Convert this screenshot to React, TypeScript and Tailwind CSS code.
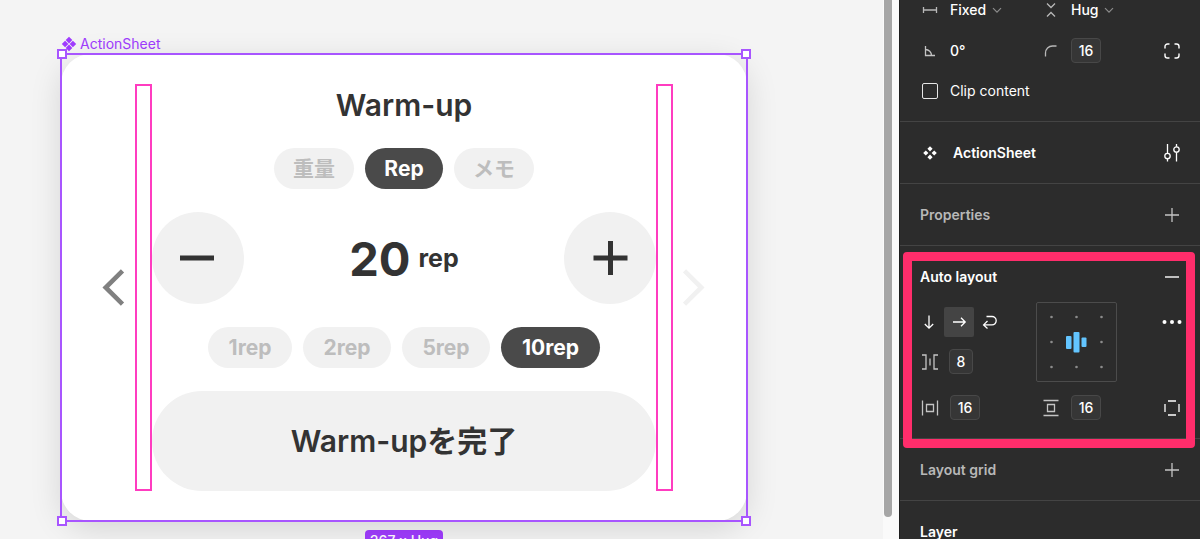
import React, { useState } from 'react';

interface IconProps {
  children: React.ReactNode;
  className?: string;
}

// 20x20 stroke icon used all over the inspector
const Icon: React.FC<IconProps> = ({ children, className = '' }) => (
  <svg
    viewBox="0 0 20 20"
    className={`w-5 h-5 shrink-0 ${className}`}
    fill="none"
    stroke="currentColor"
    strokeWidth="1.3"
    aria-hidden="true"
  >
    {children}
  </svg>
);

const ComponentIcon: React.FC<{ className?: string }> = ({ className = '' }) => (
  <svg viewBox="0 0 16 16" className={`w-4 h-4 shrink-0 ${className}`} fill="currentColor" aria-hidden="true">
    <path d="M8 .8 11.300 4.100 8 7.400 4.700 4.100ZM8 8.600 11.300 11.900 8 15.200 4.700 11.900ZM4.100 4.700 7.400 8 4.100 11.300.8 8ZM11.900 4.700 15.200 8 11.900 11.300 8.600 8Z" />
  </svg>
);

const Plus = () => (
  <Icon className="text-[#c4c4c4]">
    <path d="M3 10h14M10 3v14" />
  </Icon>
);

interface PillProps {
  label: string;
  width: string;
  active: boolean;
  onClick: () => void;
}

const Pill: React.FC<PillProps> = ({ label, width, active, onClick }) => (
  <button
    onClick={onClick}
    className={`h-[41px] rounded-full text-[21px] font-bold ${width} ${
      active ? 'bg-[#4a4a4a] text-white' : 'bg-[#f1f1f1] text-[#bdbdbd]'
    }`}
  >
    {label}
  </button>
);

const Spacing = () => <div className="w-[17px] shrink-0 border-2 border-[#ff3cc0]" />;

const tabs = [
  { label: '重量', width: 'w-20' },
  { label: 'Rep', width: 'w-[78px]' },
  { label: 'メモ', width: 'w-20' },
];

const steps = [
  { label: '1rep', value: 1, width: 'w-[84px]' },
  { label: '2rep', value: 2, width: 'w-[88px]' },
  { label: '5rep', value: 5, width: 'w-[88px]' },
  { label: '10rep', value: 10, width: 'w-[99px]' },
];

const ActionSheet = () => {
  const [tab, setTab] = useState('Rep');
  const [step, setStep] = useState(10);
  const [count, setCount] = useState(20);

  return (
    <div className="flex rounded-[30px] bg-white px-[30px] py-[30px] text-[#333333] shadow-[0_8px_32px_rgba(0,0,0,0.13)]">
      <button aria-label="Previous" className="w-11 shrink-0 flex items-center justify-center text-[#808080]">
        <svg viewBox="0 0 24 40" className="w-6 h-10" fill="none" stroke="currentColor" strokeWidth="4.600">
          <path d="M21.500 2.800 4.700 19.500 21.500 36.200" />
        </svg>
      </button>
      <Spacing />
      <div className="flex-1 min-w-0 flex flex-col gap-[23px]">
        <h1 className="h-[41px] pt-0.5 flex items-center justify-center text-[30px] font-semibold">Warm-up</h1>
        <div className="flex justify-center gap-[11px]">
          {tabs.map((t) => (
            <Pill key={t.label} label={t.label} width={t.width} active={tab === t.label} onClick={() => setTab(t.label)} />
          ))}
        </div>
        <div className="flex items-center justify-between">
          <button
            aria-label="Decrease"
            onClick={() => setCount(count - step)}
            className="w-[92px] h-[92px] rounded-full bg-[#f1f1f1] flex items-center justify-center"
          >
            <svg viewBox="0 0 36 36" className="w-9 h-9" stroke="currentColor" strokeWidth="5">
              <path d="M0 18h34" />
            </svg>
          </button>
          <p className="flex items-center gap-2">
            <span className="text-[47px] leading-none font-bold">{count}</span>
            <span className="text-[25px] leading-none font-bold">rep</span>
          </p>
          <button
            aria-label="Increase"
            onClick={() => setCount(count + step)}
            className="w-[92px] h-[92px] rounded-full bg-[#f1f1f1] flex items-center justify-center"
          >
            <svg viewBox="0 0 36 36" className="w-9 h-9" stroke="currentColor" strokeWidth="5">
              <path d="M1.500 18h34M18.500 1v34" />
            </svg>
          </button>
        </div>
        <div className="flex justify-center gap-[11px]">
          {steps.map((s) => (
            <Pill key={s.label} label={s.label} width={s.width} active={step === s.value} onClick={() => setStep(s.value)} />
          ))}
        </div>
        <button className="h-[100px] rounded-full bg-[#f1f1f1] text-[30px] font-semibold">Warm-upを完了</button>
      </div>
      <Spacing />
      <button aria-label="Next" className="w-11 shrink-0 flex items-center justify-center text-[#f1f1f1]">
        <svg viewBox="0 0 24 40" className="w-6 h-10" fill="none" stroke="currentColor" strokeWidth="4.600">
          <path d="M1.500 2.800 18.300 19.500 1.500 36.200" />
        </svg>
      </button>
    </div>
  );
};

const Canvas = () => (
  <main className="flex-1 min-w-0 overflow-hidden bg-[#f4f4f4] pl-[61px] pr-4 pt-9">
    <div className="max-w-[686px]">
      <div className="flex items-center gap-[3px] h-[18px] pb-0.5 text-[#a03cff]">
        <ComponentIcon />
        <span className="text-sm leading-4">ActionSheet</span>
      </div>
      <div className="relative">
        <ActionSheet />
        {/* Selection outline and its handles */}
        <div className="absolute -inset-px border-2 border-[#a855ff] pointer-events-none" />
        <span className="absolute -left-1 -top-[5px] w-2.5 h-2.5 border-2 border-[#a855ff] bg-white" />
        <span className="absolute -right-1 -top-[5px] w-2.5 h-2.5 border-2 border-[#a855ff] bg-white" />
        <span className="absolute -left-1 -bottom-[5px] w-2.5 h-2.5 border-2 border-[#a855ff] bg-white" />
        <span className="absolute -right-1 -bottom-[5px] w-2.5 h-2.5 border-2 border-[#a855ff] bg-white" />
      </div>
      <div className="mt-[9px] flex justify-center">
        <span className="rounded bg-[#a03cff] px-[5px] py-px text-sm leading-5 font-medium text-white">367 x Hug</span>
      </div>
    </div>
  </main>
);

interface ValueBoxProps {
  label: string;
  value: string;
  width?: string;
}

const ValueBox: React.FC<ValueBoxProps> = ({ label, value, width = 'w-[30px]' }) => (
  <input
    aria-label={label}
    defaultValue={value}
    className={`h-[25px] rounded border border-[#484848] bg-[#363636] text-center text-sm font-medium text-white ${width}`}
  />
);

interface SizingProps {
  label: string;
  value: string;
  width: string;
}

const Sizing: React.FC<SizingProps> = ({ label, value, width }) => (
  <span className="flex items-center">
    <select aria-label={label} defaultValue={value} className={`appearance-none bg-transparent text-sm font-medium text-white ${width}`}>
      <option>Fixed</option>
      <option>Hug</option>
    </select>
    <svg viewBox="0 0 10 10" className="w-2.5 h-2.5" fill="none" stroke="#8c8c8c" strokeWidth="1.2">
      <path d="M1 3.200 5 7.200 9 3.200" />
    </svg>
  </span>
);

const row = 'grid grid-cols-[121px_121px_1fr] items-center';
const cell = 'flex items-center gap-2.5';
const section = 'flex h-[62px] items-center justify-between border-b border-[#444444] pl-5 pr-[18px]';

const Inspector = () => {
  const [clip, setClip] = useState(false);

  return (
    <aside className="w-[301px] shrink-0 overflow-hidden border-l border-[#1e1e1e] bg-[#2c2c2c] text-sm text-white">
      <section className="h-[122px] border-b border-[#444444] pl-5 pr-[18px]">
        <div className={`${row} h-5`}>
          <div className={cell}>
            <Icon className="text-[#b8b8b8]">
              <path d="M3.500 7v6M16.500 7v6M3.500 10h13" />
            </Icon>
            <Sizing label="Horizontal sizing" value="Fixed" width="w-[42px]" />
          </div>
          <div className={cell}>
            <Icon className="text-[#b8b8b8]">
              <path d="M6 3.500 10 7.500 14 3.500M6 16.500 10 12.500 14 16.500" />
            </Icon>
            <Sizing label="Vertical sizing" value="Hug" width="w-[33px]" />
          </div>
        </div>
        <div className={`${row} mt-[18px] h-[25px]`}>
          <div className={cell}>
            <Icon className="text-[#c4c4c4]">
              <path d="M5.500 5v9.500h9.500M5.500 8.500a6 6 0 0 1 6 6" />
            </Icon>
            <input aria-label="Rotation" defaultValue="0°" className="w-10 bg-transparent text-sm font-medium text-white" />
          </div>
          <div className={cell}>
            <Icon className="text-[#b8b8b8]">
              <path d="M4.500 15.500v-3.500a7 7 0 0 1 7-7h4" />
            </Icon>
            <ValueBox label="Corner radius" value="16" />
          </div>
          <button aria-label="Independent corners" className="justify-self-end">
            <Icon>
              <path strokeWidth="1.400" strokeLinecap="round" d="M3 7V5.500A2.500 2.500 0 0 1 5.500 3H7M13 3h1.500A2.500 2.500 0 0 1 17 5.500V7M17 13v1.500a2.500 2.500 0 0 1-2.500 2.500H13M7 17H5.500A2.500 2.500 0 0 1 3 14.500V13" />
            </Icon>
          </button>
        </div>
        <label className="mt-[18px] flex h-5 items-center gap-3 pl-0.5">
          <input
            type="checkbox"
            checked={clip}
            onChange={(e) => setClip(e.target.checked)}
            className="w-4 h-4 appearance-none rounded-xs border border-[#e6e6e6] checked:bg-white"
          />
          Clip content
        </label>
      </section>

      <section className={section}>
        <h2 className="flex items-center gap-[13px] font-semibold">
          <svg viewBox="0 0 20 20" className="w-5 h-5" fill="currentColor" aria-hidden="true">
            <path d="M10 3.200 12.600 5.800 10 8.400 7.400 5.800ZM10 11.600 12.600 14.200 10 16.800 7.400 14.200ZM5.800 7.400 8.400 10 5.800 12.600 3.200 10ZM14.200 7.400 16.800 10 14.200 12.600 11.600 10Z" />
          </svg>
          ActionSheet
        </h2>
        <button aria-label="Component configuration">
          <Icon>
            <path d="M5.500 1v9.200M5.500 15.800V18.500M14.500 1v2.700M14.500 9.300V18.500" />
            <circle cx="5.500" cy="13" r="2.700" />
            <circle cx="14.500" cy="6.500" r="2.700" />
          </Icon>
        </button>
      </section>

      <section className={section}>
        <h2 className="font-semibold text-[#b8b8b8]">Properties</h2>
        <button aria-label="Add property">
          <Plus />
        </button>
      </section>

      <section className="relative h-[193px] border-b border-[#444444] pl-5 pr-[18px]">
        <div className="flex h-[62px] items-center justify-between">
          <h2 className="font-semibold">Auto layout</h2>
          <button aria-label="Remove auto layout">
            <Icon>
              <path strokeWidth="1.400" d="M3 10h14" />
            </Icon>
          </button>
        </div>
        <div className="-mt-1.5 grid grid-cols-[116px_121px_1fr]">
          <div>
            <div className="mt-1 flex h-[31px] items-center">
              <button aria-label="Vertical layout" className="-ml-px mr-[5px]">
                <Icon>
                  <path d="M10 3.500v12.500M5.800 12 10 16.200 14.200 12" />
                </Icon>
              </button>
              <button aria-label="Horizontal layout" className="flex h-[30px] w-[30px] items-center justify-center rounded-xs bg-[#444444]">
                <Icon>
                  <path d="M4 10h12M12 5.800 16.200 10 12 14.200" />
                </Icon>
              </button>
              <button aria-label="Wrap" className="ml-1.5">
                <Icon>
                  <path d="M6.500 4.500h5.500a4.200 4.200 0 0 1 0 8.400H3.800M7.500 9 3.600 12.900 7.500 16.500" />
                </Icon>
              </button>
            </div>
            <div className="mt-3 flex items-center gap-[9px]">
              <Icon className="text-[#c4c4c4]">
                <path d="M2 3h4v14H2M18 3h-4v14h4M10 6.500v7" />
              </Icon>
              <ValueBox label="Gap between items" value="8" width="w-6" />
            </div>
          </div>
          <button aria-label="Alignment" className="h-20 w-[81px]">
            <svg viewBox="0 0 81 80" className="h-20 w-[81px]">
              <rect x="0.500" y="0.500" width="80" height="79" rx="1.500" fill="none" stroke="#4c4c4c" />
              <g fill="#8c8c8c">
                {[15, 40, 65].map((y) =>
                  [15, 40, 65].map((x) => (x === 40 && y === 40 ? null : <circle key={`${x}-${y}`} cx={x + 0.5} cy={y} r="1.300" />))
                )}
              </g>
              <g fill="#63c5ff">
                <rect x="30" y="34" width="5.500" height="13" rx="1" />
                <rect x="37.500" y="30" width="6" height="20.500" rx="1" />
                <rect x="45.500" y="35.500" width="5" height="9.500" rx="1" />
              </g>
            </svg>
          </button>
          <button aria-label="Advanced layout" className="mt-2.5 h-5 justify-self-end">
            <svg viewBox="0 0 20 20" className="h-5 w-5" fill="currentColor">
              <circle cx="2.500" cy="10" r="2" />
              <circle cx="10" cy="10" r="2" />
              <circle cx="17.500" cy="10" r="2" />
            </svg>
          </button>
        </div>
        <div className={`${row} mt-[13px] h-[25px]`}>
          <div className={cell}>
            <Icon className="text-[#c4c4c4]">
              <path d="M2.500 2.500v15M17.500 2.500v15M6.500 6.500h7v7h-7z" />
            </Icon>
            <ValueBox label="Horizontal padding" value="16" />
          </div>
          <div className={cell}>
            <Icon className="text-[#c4c4c4]">
              <path d="M2.500 2.500h15M2.500 17.500h15M6.500 6.500h7v7h-7z" />
            </Icon>
            <ValueBox label="Vertical padding" value="16" />
          </div>
          <button aria-label="Individual padding" className="justify-self-end">
            <Icon>
              <path d="M6 3h8M6 17h8M3 6v8M17 6v8" />
            </Icon>
          </button>
        </div>
        {/* Highlight around the whole section */}
        <div className="absolute left-[3px] right-[5px] top-1.5 -bottom-2.5 rounded border-[9px] border-[#ff2d6b] pointer-events-none" />
      </section>

      <section className={section}>
        <h2 className="font-semibold text-[#b8b8b8]">Layout grid</h2>
        <button aria-label="Add layout grid">
          <Plus />
        </button>
      </section>

      <section className={section}>
        <h2 className="font-semibold">Layer</h2>
      </section>
    </aside>
  );
};

export default function App() {
  return (
    <div className="flex h-screen overflow-hidden font-['Inter','Noto_Sans_CJK_JP',sans-serif]">
      <Canvas />
      <div className="flex w-4 shrink-0 bg-[#fafafa] pb-[22px] pl-px">
        <div className="w-2 rounded-b-full bg-[#a6a6a6]" />
      </div>
      <Inspector />
    </div>
  );
}
